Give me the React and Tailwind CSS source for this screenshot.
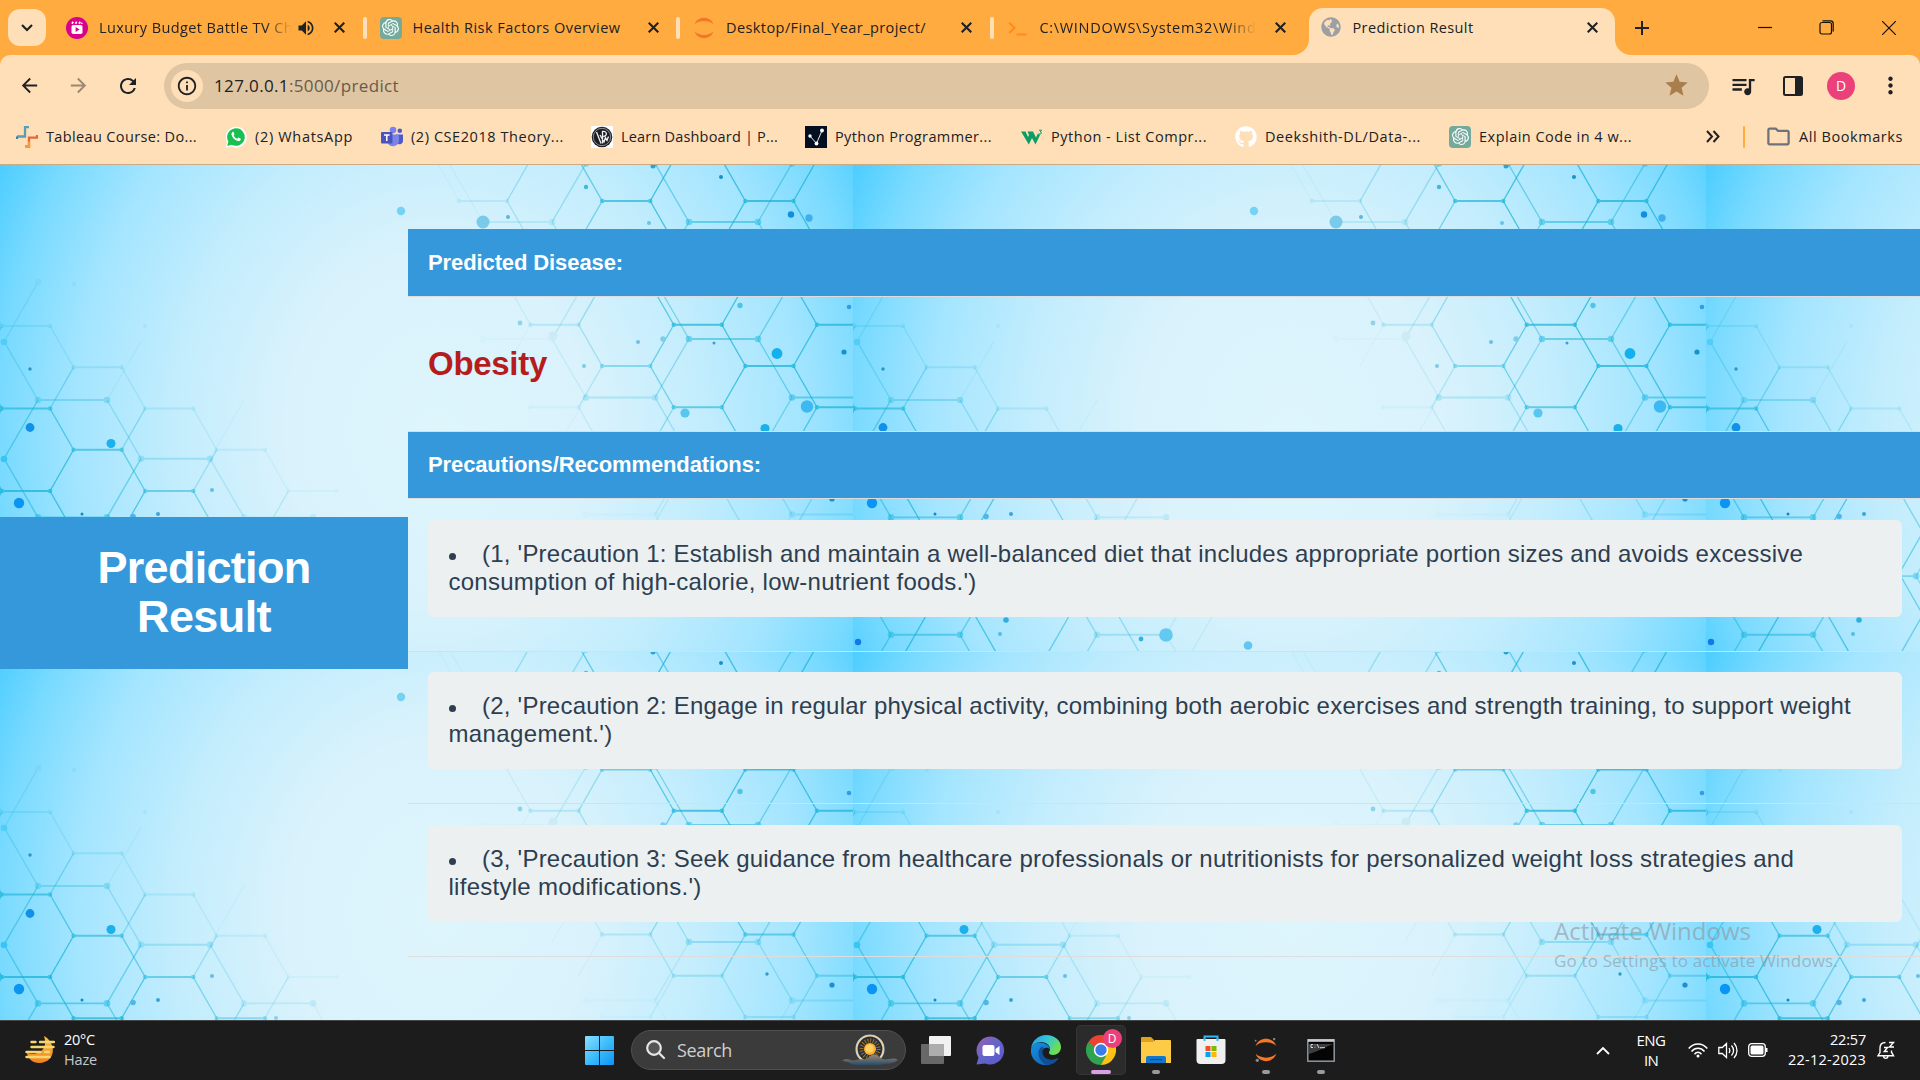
import React, { useLayoutEffect, useRef } from "react";
import {
  MdArrowBack, MdArrowForward, MdRefresh, MdVolumeUp, MdStar, MdQueueMusic,
  MdInfoOutline, MdMoreVert, MdOutlineFolder,
} from "react-icons/md";
import { FaGithub, FaGlobeAmericas } from "react-icons/fa";
import { SiOpenai } from "react-icons/si";

/* One line of text whose letter spacing is set so that it spans `w` pixels. */
function Fit({ w, className = "", children }) {
  const ref = useRef(null);
  useLayoutEffect(() => {
    const el = ref.current;
    el.style.letterSpacing = "0px";
    const n = el.textContent.length;
    const natural = el.getBoundingClientRect().width;
    el.style.letterSpacing = `${(w - natural) / n}px`;
  }, [w, children]);
  return (
    <span className={`block shrink-0 whitespace-nowrap ${className}`} style={{ width: w }}>
      <span ref={ref} className="inline-block">{children}</span>
    </span>
  );
}

/* ---------- molecular wallpaper ---------- */
const TW = 853;
const TH = 486;
const clamp = (v) => Math.min(1, Math.max(0, v));

const leftStrength = (x, y) => clamp(0.27 + (y - 147 - 0.575 * x) / 140) * clamp(1.04 - (x / 370) ** 2);
const rightStrength = (x, y) => clamp(0.07 + (x - 440 - 0.45 * y) / 200) * (y < 240 ? 1 : clamp(1 - (y - 240) / 200));

function hexGrid({ x0, y0, edge, step, h, cols, maxY, r, gain, strength }) {
  const out = [];
  const add = (x1, y1, x2, y2, flat) => {
    const o = strength((x1 + x2) / 2, Math.max((y1 + y2) / 2, 0)) * gain;
    if (o > 0.03) out.push({ x1, y1, x2, y2, flat, o, r });
  };
  for (let c = 0; c < cols; c++) {
    const x = x0 + c * step;
    const lead = step - edge;
    for (let y = y0(c); y <= maxY; y += h) {
      add(x, y, x + edge, y, true);
      add(x + edge, y, x + step, y - h / 2, false);
      add(x + edge, y, x + step, y + h / 2, false);
      if (c === 0) {
        add(x, y, x - lead, y - h / 2, false);
        add(x, y, x - lead, y + h / 2, false);
      }
    }
  }
  return out;
}

const SEGMENTS = [
  ...hexGrid({ x0: 2, y0: (c) => 161 + c * 41.25, edge: 48, step: 71.6, h: 82.5, cols: 5, maxY: 540, r: 2.3, gain: 0.72, strength: leftStrength }),
  ...hexGrid({ x0: 38, y0: (c) => 235 + c * 58.7, edge: 69, step: 103, h: 117.4, cols: 3, maxY: 580, r: 3.3, gain: 0.52, strength: leftStrength }),
  ...hexGrid({ x0: 459, y0: (c) => 36 - 82.5 + (c % 2) * 41.25, edge: 48, step: 71.6, h: 82.5, cols: 6, maxY: 430, r: 2.3, gain: 0.72, strength: rightStrength }),
  ...hexGrid({ x0: 483, y0: (c) => 57 - 117 + (c % 2) * 58.5, edge: 69, step: 103, h: 117, cols: 4, maxY: 430, r: 3.3, gain: 0.5, strength: rightStrength }),
  { x1: 4, y1: 177, x2: 38, y2: 117, o: 0.22 },
];

const DOTS = [
  [401, 46, 4.2, "#74d2f3"], [483, 57, 6.5, "#79cbe9"], [508, 52, 2, "#5cb8dd"], [586, 22, 2.2, "#44b8dc"],
  [653, 1, 2.5, "#27a5d6"], [721, 12, 2, "#1792c8"], [791, 49.5, 3.2, "#118ee0"], [809, 53, 3.7, "#40aeee"],
  [649, 58, 2, "#63c4ec"], [520, 158, 2.4, "#8fd3ea"], [740, 140.5, 2.7, "#4fc4e8"], [849, 142, 2.3, "#2f9ee6"],
  [777, 188.5, 5.4, "#12b0ee"], [844, 187, 2.6, "#1493cb"], [807, 241.5, 6.2, "#3cb9f2"], [685, 248, 4.6, "#57c7f0"],
  [765, 263.5, 4.6, "#19b1ea"], [638, 177, 2, "#6fbfe0"], [663, 174, 2.7, "#7dcdec"], [714, 178, 1.5, "#3ca0c8"],
  [584, 201, 2, "#79cde4"], [832, 334, 2.6, "#198fd6"], [767, 323, 1.7, "#2c9cc8"], [553, 171, 4.500, "#cdebf4"],
  [4, 177, 3.3, "#50cdf8"], [38, 117, 3.2, "#7bd6f8"], [74, 119, 2, "#8adcf8"], [145, 161, 2, "#a6e4f8"],
  [4, 294, 3.3, "#38c4f4"],
  [30, 204, 1.7, "#2c95c8"], [30, 262.5, 4.4, "#1090e8"], [111, 278.5, 4.5, "#1cb0ec"], [19, 338, 5.2, "#0a95f5"],
  [82, 349, 1.5, "#1787c0"], [133, 351.5, 2.8, "#4fb6ea"], [158, 349, 2, "#3ba4d8"], [212, 325, 2, "#62bfe6"],
  [276, 367, 2, "#8acfe6"],
  [5, 477, 3.2, "#1478e8"], [153, 455, 2.8, "#2fb0dc"], [147, 469, 2, "#55bde6"], [288, 474, 2.4, "#35b2de"],
  [313, 470, 6.8, "#62c9f0"], [395, 480.5, 4.3, "#62c6ee"],
];

function Wallpaper() {
  return (
    <svg className="absolute inset-0 h-full w-full" aria-hidden="true">
      <defs>
        <radialGradient id="wash" gradientUnits="userSpaceOnUse" cx="0" cy="0" r="1" gradientTransform="translate(438 265) scale(548 640)">
          <stop offset="0" stopColor="#def5fc" />
          <stop offset="0.28" stopColor="#d9f2fc" />
          <stop offset="0.48" stopColor="#c3edfd" />
          <stop offset="0.66" stopColor="#a4e5ff" />
          <stop offset="0.8" stopColor="#78daff" />
          <stop offset="0.9" stopColor="#4ccdff" />
        </radialGradient>
        <pattern id="tile" width={TW} height={TH} patternUnits="userSpaceOnUse">
          <rect width={TW} height={TH} fill="url(#wash)" />
          {SEGMENTS.map((s, i) => (
            <g key={i} opacity={s.o} stroke="#18b2d6" fill="#18b8e0">
              <line x1={s.x1} y1={s.y1} x2={s.x2} y2={s.y2} strokeWidth={s.flat ? 1.9 : 1.4} />
              {s.flat && <circle cx={s.x1} cy={s.y1} r={s.r} stroke="none" />}
              {s.flat && <circle cx={s.x2} cy={s.y2} r={s.r} stroke="none" />}
            </g>
          ))}
          {DOTS.map(([x, y, r, c], i) => <circle key={i} cx={x} cy={y} r={r} fill={c} />)}
        </pattern>
      </defs>
      <rect width="100%" height="100%" fill="url(#tile)" />
    </svg>
  );
}

/* ---------- favicons ---------- */
const Reel = () => (
  <svg viewBox="0 0 22 22" className="h-[22px] w-[22px]">
    <circle cx="11" cy="11" r="11" fill="#d9008d" />
    <rect x="5.5" y="8" width="11" height="9" rx="1.8" fill="#fff" />
    <path d="M6 6.8l1.2-2M9.5 6.8l1.2-2M13 6.8l1.2-2M15.5 6.8l.6-1" stroke="#fff" strokeWidth="1.7" />
    <path d="M9.6 10l4 2.5-4 2.5z" fill="#d9008d" />
  </svg>
);
const Gpt = () => (
  <span className="flex h-[22px] w-[22px] items-center justify-center rounded-[4px] bg-[#74aa9c] text-white"><SiOpenai size={17} /></span>
);
const JupyterArcs = ({ size = 22, dots = false }) => (
  <svg viewBox="0 0 22 22" width={size} height={size}>
    <path d="M1.5 7.3C3 3 7 .8 11 .8s8 2.2 9.5 6.5C18 5 14.5 4 11 4S4 5 1.5 7.3zM1.5 14.5C3 19 7 21.2 11 21.2s8-2.2 9.5-6.7C18 16.800 14.5 18 11 18s-7-1.200-9.500-3.500z" fill="#f37726" />
    {dots && <g fill="#8a8a8a"><circle cx="18.5" cy="1" r="1.1" /><circle cx="3" cy="20.500" r="1.5" /><circle cx="1.5" cy="2.5" r=".8" /></g>}
  </svg>
);
const Prompt = () => (
  <svg viewBox="0 0 22 22" className="h-[22px] w-[22px]" fill="none" stroke="#ff8a1e" strokeWidth="2"><path d="M2 5.5l5.5 5.5L2 16M9.5 17.5h10" /></svg>
);
const Tableau = () => (
  <svg viewBox="0 0 22 22" className="h-[22px] w-[22px]" fill="none" strokeWidth="2.3">
    <path d="M13 1.200h-4v9.300H1" stroke="#5b9db5" /><path d="M1 13v-2.500" stroke="#3d7ea6" />
    <path d="M9 20.500h4v-8.800h8V9" stroke="#e8663d" /><path d="M9 20.500h4v-5" stroke="#f79a3c" />
  </svg>
);
const WhatsApp = () => (
  <svg viewBox="0 0 22 22" className="h-[22px] w-[22px]">
    <path d="M.5 21.700L2 16A10.500 10.500 0 1 1 6 20.200z" fill="#fff" />
    <path d="M2.200 19.900l1.200-4.300a8.800 8.800 0 1 1 3.200 3.100z" fill="#18c04f" />
    <path d="M7.600 6c-.9.600-1.400 1.800-1 3 .9 2.900 3 5 6 6 1.300.4 2.600-.1 3.100-1.200.3-.8.200-1-.3-1.300l-1.600-.8c-.4-.2-.7-.1-.9.200l-.7.9c-1.600-.6-2.800-1.700-3.600-3.200l.7-.9c.2-.3.200-.5.100-.8L8.700 6.200c-.3-.5-.7-.5-1.100-.2z" fill="#fff" />
  </svg>
);
const Teams = () => (
  <svg viewBox="0 0 22 22" className="h-[22px] w-[22px]">
    <circle cx="12" cy="4" r="3.300" fill="#7b83eb" /><circle cx="18.800" cy="4.800" r="2.300" fill="#5059c9" />
    <path d="M15 8.500h7v6.500a3.500 3.500 0 0 1-5 3z" fill="#5059c9" />
    <path d="M6.500 8.500H18V15a6 6 0 0 1-11.500 1.500z" fill="#7b83eb" />
    <rect x="0" y="6" width="11.500" height="11.500" rx="1" fill="#4b53bc" />
    <path d="M3 9h5.600M5.800 9v6" stroke="#fff" strokeWidth="1.500" />
  </svg>
);
const Press = () => (
  <svg viewBox="0 0 22 22" className="h-[22px] w-[22px]">
    <rect width="22" height="22" fill="#fff" /><circle cx="11" cy="11" r="10.300" fill="#1b1f24" />
    <circle cx="11" cy="11" r="8.700" fill="none" stroke="#a8abae" strokeWidth=".8" />
    <path d="M5.500 6l4.500 11.500M11.500 17.500V5.500c4.500-1 5.500 4.500.8 5M9 9l4 7 1.500-4.500 1.500 3 1.500-4" fill="none" stroke="#f1f1f1" strokeWidth="1.300" />
  </svg>
);
const Nodes = () => (
  <svg viewBox="0 0 22 22" className="h-[22px] w-[22px]">
    <rect width="22" height="22" fill="#010f20" /><path d="M5 10l6.500 7.500L17 4.500" fill="none" stroke="#dfe5ea" strokeWidth="1" />
    <g fill="#fff"><circle cx="5" cy="10" r="1.700" /><circle cx="11.500" cy="17.500" r="1.900" /><circle cx="17" cy="4.500" r="1.900" /></g>
  </svg>
);
const W3 = () => (
  <svg viewBox="0 0 22 22" className="h-[22px] w-[22px]">
    <path d="M0 5.500h4.500l2.500 5.500 1-2L6.500 5.500H12l3 6 2-4 2 1.500-4.500 9.500-3.500-6.500-3.200 6.500z" fill="#0b9d66" />
    <path d="M18 4.200h2.700l-1.500 1.700c2 .1 1.800 2.800-1.400 2" fill="none" stroke="#0b9d66" strokeWidth="1" />
  </svg>
);

/* ---------- browser chrome ---------- */
const CloseX = ({ className = "" }) => (
  <svg viewBox="0 0 11 11" className={`h-[11px] w-[11px] shrink-0 ${className}`} fill="none" stroke="#202124" strokeWidth="2.100"><path d="M.7.700l9.600 9.600M10.300.700L.7 10.300" /></svg>
);

const tabFade = "[mask-image:linear-gradient(90deg,#000_86%,transparent)]";

function Tab({ icon, title, w, fade, sound, last }) {
  return (
    <div className={`flex h-[54px] shrink-0 items-center pl-[13px] ${last ? "w-[315px]" : "w-[313.5px]"}`}>
      <span className="flex w-[22px] shrink-0 justify-center">{icon}</span>
      <div className={`ml-[11px] overflow-hidden ${sound ? "w-[193px]" : "w-[216px]"} ${fade ? tabFade : ""}`}>
        <Fit w={w} className="text-[14.5px]">{title}</Fit>
      </div>
      {sound && <MdVolumeUp size={20} className="ml-[4px] mr-[-1px] shrink-0" />}
      <CloseX className="ml-[19px]" />
      {!last && <span className="ml-auto h-[22px] w-[4px] rounded-full bg-[#ffdfb8]" />}
    </div>
  );
}

function TabStrip() {
  return (
    <div className="flex h-[55px] items-center bg-[#ffab40]">
      <div className="ml-[8px] flex h-[37px] w-[38px] shrink-0 items-center justify-center rounded-[12px] bg-[#ffdfb8]">
        <svg viewBox="0 0 12 8" className="h-[8px] w-[12px]" fill="none" stroke="#202124" strokeWidth="2.200"><path d="M1 1l5 5 5-5" /></svg>
      </div>
      <div className="ml-[7px] flex shrink-0">
        <Tab icon={<Reel />} title="Luxury Budget Battle TV Ch" w={194} fade sound />
        <Tab icon={<Gpt />} title="Health Risk Factors Overview" w={208} />
        <Tab icon={<JupyterArcs />} title="Desktop/Final_Year_project/" w={200} />
        <Tab icon={<Prompt />} title="C:\WINDOWS\System32\Wind" w={217} fade last />
      </div>
      <div className="relative flex h-[47px] w-[306px] shrink-0 items-center self-end rounded-t-[14px] bg-[#ffdfb8] pb-[2px] pl-[12px]">
        <svg viewBox="0 0 16 16" className="absolute bottom-0 left-[-16px] h-[16px] w-[16px]"><path d="M16 0v16H0A16 16 0 0 0 16 0z" fill="#ffdfb8" /></svg>
        <svg viewBox="0 0 16 16" className="absolute right-[-16px] bottom-0 h-[16px] w-[16px]"><path d="M0 0v16h16A16 16 0 0 1 0 0z" fill="#ffdfb8" /></svg>
        <FaGlobeAmericas size={20} className="mt-[-7px] text-[#9aa0a6]" />
        <Fit w={121} className="mt-[-5px] ml-[12px] text-[14.5px]">Prediction Result</Fit>
        <CloseX className="mt-[-7px] mr-[17px] ml-auto" />
      </div>
      <svg viewBox="0 0 14 14" className="ml-[20px] h-[14px] w-[14px] shrink-0" fill="none" stroke="#202124" strokeWidth="2"><path d="M0 7h14M7 0v14" /></svg>
      <svg viewBox="0 0 14 14" className="ml-[109px] h-[14px] w-[14px]" fill="none" stroke="#111" strokeWidth="1.2"><path d="M0 6.500h14" /></svg>
      <svg viewBox="0 0 15 15" className="ml-[47px] h-[15px] w-[15px]" fill="none" stroke="#111" strokeWidth="1.2"><rect x="1" y="2.500" width="11.500" height="11.500" rx="2" /><path d="M3.500.8h8a2.700 2.700 0 0 1 2.700 2.700v8" /></svg>
      <svg viewBox="0 0 14 14" className="ml-[48px] h-[14px] w-[14px]" fill="none" stroke="#111" strokeWidth="1.2"><path d="M0 0l14 14M14 0L0 14" /></svg>
    </div>
  );
}

function Toolbar() {
  return (
    <div className="h-[61px] bg-[#ffab40]">
      <div className="flex h-full items-center rounded-t-[10px] bg-[#ffdfb8]">
        <MdArrowBack size={23} className="ml-[18px] shrink-0" stroke="none" />
        <MdArrowForward size={23} className="ml-[26px] shrink-0 text-[#9b8870]" />
        <MdRefresh size={24} className="ml-[26px] shrink-0" />
        <div className="ml-[24px] flex h-[46px] w-[1545px] shrink-0 items-center rounded-full bg-[#dfc5a2]">
          <span className="ml-[7px] flex h-[32px] w-[32px] items-center justify-center rounded-full bg-[#ffdfb8]"><MdInfoOutline size={22} /></span>
          <Fit w={185} className="ml-[11px] text-[17px] text-[#675b4b]"><span className="text-[#202124]">127.0.0.1</span>:5000/predict</Fit>
          <MdStar size={27} className="mr-[19px] ml-auto text-[#a97e4d]" />
        </div>
        <MdQueueMusic size={28} className="ml-[20px] shrink-0" />
        <svg viewBox="0 0 20 20" className="ml-[26px] h-[20px] w-[20px] shrink-0"><rect x="1" y="1" width="18" height="18" rx="1.500" fill="none" stroke="#202124" strokeWidth="2" /><path d="M12 1h7v18h-7z" fill="#202124" /></svg>
        <span className="ml-[24px] flex h-[28px] w-[28px] shrink-0 items-center justify-center rounded-full bg-[#ec407a] text-[14px] text-white">D</span>
        <MdMoreVert size={27} className="ml-[22px] shrink-0" />
      </div>
    </div>
  );
}

const BOOKMARKS = [
  { icon: <Tableau />, text: "Tableau Course: Do...", w: 151, m: "ml-[16px]" },
  { icon: <WhatsApp />, text: "(2) WhatsApp", w: 98, m: "ml-[28px]" },
  { icon: <Teams />, text: "(2) CSE2018 Theory...", w: 153, m: "ml-[28px]" },
  { icon: <Press />, text: "Learn Dashboard | P...", w: 157, m: "ml-[27px]" },
  { icon: <Nodes />, text: "Python Programmer...", w: 157, m: "ml-[27px]" },
  { icon: <W3 />, text: "Python - List Compr...", w: 156, m: "ml-[29px]" },
  { icon: <FaGithub size={22} color="#fff" />, text: "Deekshith-DL/Data-...", w: 156, m: "ml-[28px]" },
  { icon: <Gpt />, text: "Explain Code in 4 w...", w: 153, m: "ml-[28px]" },
];

function BookmarkBar() {
  return (
    <div className="flex h-[49px] items-center border-b-[1px] border-[#c9ab86] bg-[#ffdfb8] pb-[7px]">
      {BOOKMARKS.map((b) => (
        <div key={b.text} className={`flex shrink-0 items-center ${b.m}`}>
          <span className="w-[22px]">{b.icon}</span>
          <Fit w={b.w} className="ml-[8px] text-[14.5px]">{b.text}</Fit>
        </div>
      ))}
      <svg viewBox="0 0 14 13" className="ml-[74px] h-[13px] w-[14px]" fill="none" stroke="#202124" strokeWidth="2"><path d="M1 1l5 5.500L1 12M7.500 1l5 5.500-5 5.500" /></svg>
      <span className="ml-[23px] h-[22px] w-[2px] rounded-full bg-[#ffab40]" />
      <MdOutlineFolder size={27} className="ml-[20px] text-[#6f7378]" />
      <Fit w={104} className="ml-[7px] text-[14.5px]">All Bookmarks</Fit>
    </div>
  );
}

/* ---------- page ---------- */
const PRECAUTIONS = [
  { lines: [["(1, 'Precaution 1: Establish and maintain a well-balanced diet that includes appropriate portion sizes and avoids excessive", 1321], ["consumption of high-calorie, low-nutrient foods.')", 528]], h: "h-[153px] pt-[21px]" },
  { lines: [["(2, 'Precaution 2: Engage in regular physical activity, combining both aerobic exercises and strength training, to support weight", 1369], ["management.')", 164]], h: "h-[152px] pt-[20px]" },
  { lines: [["(3, 'Precaution 3: Seek guidance from healthcare professionals or nutritionists for personalized weight loss strategies and", 1312], ["lifestyle modifications.')", 253]], h: "h-[153px] pt-[21px]" },
];

function Page() {
  return (
    <main className="relative h-[855px] overflow-hidden font-['Liberation_Sans',Arial,sans-serif]">
      <Wallpaper />
      <div className="relative flex h-full">
        <div className="mt-[352px] flex h-[152px] w-[408px] shrink-0 flex-col items-center bg-[#3598db] pt-[26px] text-[45px] leading-[49px] font-bold text-white">
          <Fit w={213}>Prediction</Fit>
          <Fit w={134}>Result</Fit>
        </div>
        <div className="mt-[64px] min-w-0 flex-1 text-[#2c3e50]">
          <div className="flex h-[68px] items-center border-b border-[#ddd] bg-[#3598db] pl-[20px] text-[22px] font-bold text-white"><Fit w={195}>Predicted Disease:</Fit></div>
          <div className="flex h-[135px] items-center border-b border-[#ddd] pl-[20px] text-[33px] font-bold text-[#b71c1c]"><Fit w={119}>Obesity</Fit></div>
          <div className="flex h-[67px] items-center border-b border-[#ddd] bg-[#3598db] pb-[2px] pl-[20px] text-[22px] font-bold text-white"><Fit w={333}>Precautions/Recommendations:</Fit></div>
          {PRECAUTIONS.map((p) => (
            <div key={p.lines[0][0]} className={`border-b border-[#ddd] pl-[20px] ${p.h}`}>
              <div className="h-[97px] w-[1474px] rounded-[6px] bg-[#ecf0f1] px-[20px] pt-[20px] text-[24px] leading-[28px]">
                <div className="flex items-center">
                  <span className="mt-[4px] mr-[26px] ml-[1px] h-[7px] w-[7px] rounded-full bg-[#2c3e50]" />
                  <Fit w={p.lines[0][1]}>{p.lines[0][0]}</Fit>
                </div>
                <Fit w={p.lines[1][1]} className="ml-[0.5px]">{p.lines[1][0]}</Fit>
              </div>
            </div>
          ))}
        </div>
      </div>
      <div className="absolute top-[748px] left-[1554px] font-['Open_Sans','Noto_Sans',sans-serif] text-[#8f9499]/60">
        <Fit w={197} className="text-[24px] leading-[36px]">Activate Windows</Fit>
        <Fit w={284} className="text-[17px] leading-[24px]">Go to Settings to activate Windows.</Fit>
      </div>
    </main>
  );
}

/* ---------- taskbar ---------- */
const Slot = ({ children, running, active }) => (
  <div className={`relative flex h-[50px] w-[50px] shrink-0 items-center justify-center rounded-[5px] ${active ? "bg-[#2b2b2b] ring-1 ring-[#353535] ring-inset" : ""}`}>
    {children}
    {running && <span className="absolute bottom-[1px] h-[4px] w-[8px] rounded-full bg-[#9a9a9a]" />}
    {active && <span className="absolute bottom-[1px] h-[4px] w-[20px] rounded-full bg-[#d9a0e6]" />}
  </div>
);

function Taskbar() {
  return (
    <footer className="flex h-[60px] items-center border-t border-[#454545] bg-[#1c1c1c] pb-px text-white">
      <svg viewBox="0 0 30 30" className="ml-[25px] h-[30px] w-[30px] shrink-0">
        <defs><linearGradient id="moon" x2="0" y2="1"><stop stopColor="#f9c23c" /><stop offset="1" stopColor="#f08222" /></linearGradient></defs>
        <path d="M19 1c13 7 12 27-5 27C8 28 3 24 2 18c9 3 22-2 17-17z" fill="url(#moon)" />
        <g stroke="#f5d673" strokeWidth="2.400" strokeLinecap="round"><path d="M6.500 7h4M15 7h14M6.500 12h22M1.500 17h14M20 17h4M1.500 22h23" /></g>
      </svg>
      <div className="ml-[9px] w-[60px] text-[14.5px] leading-[20px]"><Fit w={31}>20°C</Fit><Fit w={33} className="text-[#c8c8c8]">Haze</Fit></div>
      <svg viewBox="0 0 29 29" className="ml-[461px] h-[29px] w-[29px] shrink-0">
        <defs><linearGradient id="win" x2="1" y2="1"><stop stopColor="#8be0ff" /><stop offset=".5" stopColor="#3dbdfb" /><stop offset="1" stopColor="#0f93f5" /></linearGradient></defs>
        <path d="M0 1q0-1 1-1h13v14H0zM15 0h13q1 0 1 1v13H15zM0 15h14v14H1q-1 0-1-1zM15 15h14v13q0 1-1 1H15z" fill="url(#win)" />
      </svg>
      <div className="ml-[17px] flex h-[40px] w-[275px] shrink-0 items-center rounded-full border border-[#505050] bg-[#3b3b3b]">
        <svg viewBox="0 0 20 20" className="ml-[14px] h-[20px] w-[20px]" fill="none" stroke="#e4e6e8" strokeWidth="2.200" strokeLinecap="round"><circle cx="8" cy="8" r="6.800" fill="#555" /><path d="M13 13l5 5" /></svg>
        <Fit w={55} className="ml-[11px] text-[18px] text-[#cfcfcf]">Search</Fit>
        <svg viewBox="0 0 56 34" className="mr-[7px] ml-auto h-[34px] w-[56px]">
          <defs><linearGradient id="hill" x2="0" y2="1"><stop stopColor="#a18772" /><stop offset="1" stopColor="#274c68" /></linearGradient></defs>
          <circle cx="28" cy="16" r="14" fill="#2a3038" stroke="#8fd0dc" strokeWidth="1.200" /><circle cx="28" cy="16" r="13.200" fill="none" stroke="#f6cfa4" strokeWidth="1.600" />
          <circle cx="28" cy="16" r="8.500" fill="none" stroke="#a87d28" strokeWidth="4" strokeDasharray=".9 1.770" />
          <circle cx="28" cy="16" r="6" fill="#fdb02e" /><circle cx="27.500" cy="15.500" r="4" fill="#ffd163" />
          <path d="M0 28c5-5 9 1 14-1s9 1 13-3 7-3 12 1 12-2 17 2c-6 5-12 3-18 5H14c-5 0-8-4-14-4z" fill="url(#hill)" />
        </svg>
      </div>
      <svg viewBox="0 0 30 28" className="ml-[15px] h-[28px] w-[30px] shrink-0"><rect x="8" y="0" width="22" height="20" rx="1" fill="#f2f2f2" /><rect x="0" y="8" width="23" height="20" rx="1" fill="#686868" /><path d="M8 8h15v12H8z" fill="#adadad" /></svg>
      <div className="ml-[14.5px] flex items-center gap-[5px]">
        <Slot>
          <svg viewBox="0 0 29 29" className="h-[29px] w-[29px]"><defs><linearGradient id="chat" x2="1" y2="1"><stop stopColor="#9c62b6" /><stop offset=".5" stopColor="#6264c8" /><stop offset="1" stopColor="#5b57d0" /></linearGradient></defs><path d="M15 .5a14 14 0 1 1-6 27L.5 28.500l2-7A14 14 0 0 1 15 .5z" fill="url(#chat)" /><rect x="6.500" y="9" width="12" height="11" rx="2" fill="#fff" /><path d="M19.500 13l4-3v9l-4-3z" fill="#fff" /></svg>
        </Slot>
        <Slot>
          <svg viewBox="0 0 30 30" className="h-[30px] w-[30px]">
            <defs><linearGradient id="e1" x2="1" y2=".5"><stop stopColor="#1e9de6" /><stop offset=".5" stopColor="#33c3dd" /><stop offset="1" stopColor="#6ee04f" /></linearGradient><linearGradient id="e2" x2="1" y2="1"><stop stopColor="#1a8fe0" /><stop offset="1" stopColor="#0d5cae" /></linearGradient></defs>
            <path d="M0 14C1 5 8 0 15 0c9 0 15 6 15 12 0 5-4 8-8 8-3 0-4-1-4-2.500 0-1 1-1.500 1-3.500C19 10 15 7 10 7 5 7 1 10 0 14z" fill="url(#e1)" />
            <path d="M0 14c1-4 4-6.500 9-6.500 5 0 10 3 10 7-2-3-8-2-8 3 0 6 8 10 16 5.500C24 28 20 30 15 30 6 30-1 23 0 14z" fill="url(#e2)" />
            <path d="M11 11.500c-6 4-4 14 4 18.300 5 .5 10-2.300 12.500-6.500-8 4-16 0-16-6 0-2 .5-3 1.500-4z" fill="#0f4f96" />
          </svg>
        </Slot>
        <Slot active>
          <svg viewBox="0 0 30 30" className="h-[30px] w-[30px]">
            <path d="M15 15L2 7.500A15 15 0 0 1 28 7.500z" fill="#ea4335" /><path d="M15 15L28 7.500A15 15 0 0 1 15 30z" fill="#fbc116" /><path d="M15 30A15 15 0 0 1 2 7.500L15 15l5 6z" fill="#31a350" /><path d="M15 8h13.300L21.500 19z" fill="#fbc116" /><path d="M2 7.500L9 19l6-11z" fill="#31a350" /><path d="M2.500 7h25v1.500H15L9 12z" fill="#ea4335" />
            <circle cx="15" cy="15" r="7.200" fill="#fff" /><circle cx="15" cy="15" r="5.700" fill="#3a7de8" />
          </svg>
          <span className="absolute top-[4px] left-[27px] flex h-[19px] w-[19px] items-center justify-center rounded-full bg-[#ec407a] text-[12px] leading-none">D</span>
        </Slot>
        <Slot running>
          <svg viewBox="0 0 30 27" className="h-[27px] w-[30px]"><path d="M0 1q0-1 1-1h9l3 3v5H0z" fill="#e0a21c" /><path d="M0 5h12l2-2h15q1 0 1 1v22H0z" fill="#fdcb45" /><path d="M5 26v-5q0-2 2-2h16q2 0 2 2v5z" fill="#1277cc" /><path d="M9 22.500h12" stroke="#0b4f94" strokeWidth="1.200" /></svg>
        </Slot>
        <Slot>
          <svg viewBox="0 0 30 30" className="h-[30px] w-[30px]"><path d="M8.500 6V1.500h13V6" fill="none" stroke="#35b8f0" strokeWidth="2" /><path d="M.5 5q0-1 1-1h27q1 0 1 1v20q0 4-4 4h-21q-4 0-4-4z" fill="#f0f0f0" /><path d="M8.500 6V3.500M21.500 6V3.500" stroke="#35b8f0" strokeWidth="2" /><path d="M9.500 11h5v5h-5z" fill="#f25022" /><path d="M15.500 11h5v5h-5z" fill="#7fba00" /><path d="M9.500 17h5v5h-5z" fill="#00a4ef" /><path d="M15.500 17h5v5h-5z" fill="#ffb900" /></svg>
        </Slot>
        <Slot running><JupyterArcs size={24} dots /></Slot>
        <Slot running>
          <svg viewBox="0 0 28 23" className="h-[23px] w-[28px]"><rect x=".8" y=".8" width="26.400" height="21.400" fill="#050505" stroke="#8f979e" strokeWidth="1.500" /><path d="M1 1.500h26" stroke="#c8ccd0" strokeWidth="2.600" /><path d="M2 5h24L8 13l-6 2z" fill="#555" opacity=".7" /><path d="M6 5.500H4v3h2M8 5.500v.8M8 7.800v.8M10 5l2 4M13 8.700h5" stroke="#e8e8e8" strokeWidth=".9" fill="none" /></svg>
        </Slot>
      </div>
      <svg viewBox="0 0 14 9" className="ml-[250.5px] h-[9px] w-[14px] shrink-0" fill="none" stroke="#fff" strokeWidth="1.800"><path d="M1 8l6-6 6 6" /></svg>
      <div className="ml-[26px] flex w-[30px] flex-col items-center text-[15px] leading-[20px]"><Fit w={29}>ENG</Fit><Fit w={14}>IN</Fit></div>
      <svg viewBox="0 0 20 15" className="ml-[22px] h-[15px] w-[20px] shrink-0" fill="none" stroke="#fff" strokeWidth="1.500"><path d="M.7 5.500c5-6 13.600-6 18.600 0M3.500 8.500c3.600-4.300 9.400-4.300 13 0M6.500 11.200c2-2.500 5-2.500 7 0" /><circle cx="10" cy="13" r="1.500" fill="#fff" stroke="none" /></svg>
      <svg viewBox="0 0 20 17" className="ml-[10px] h-[17px] w-[20px] shrink-0" fill="none" stroke="#fff" strokeWidth="1.300"><path d="M.8 5.500h3.500L8.500 1.500v14l-4.200-4H.8zM11 6c1 1.500 1 3.500 0 5M13.500 3.500c2.500 3 2.500 7 0 10M16 1c4 4.500 4 10.500 0 15" /></svg>
      <svg viewBox="0 0 20 14" className="ml-[10px] h-[14px] w-[20px] shrink-0"><rect x=".7" y=".7" width="16.600" height="12.600" rx="3" fill="none" stroke="#fff" strokeWidth="1.300" /><rect x="2.500" y="2.500" width="13" height="9" rx="1.500" fill="#fff" /><path d="M18.500 5v4" stroke="#fff" strokeWidth="2" /></svg>
      <div className="ml-[20px] flex w-[78px] flex-col items-end text-[14.5px] leading-[20px]"><Fit w={36}>22:57</Fit><Fit w={78}>22-12-2023</Fit></div>
      <svg viewBox="0 0 18 19" className="ml-[11px] h-[19px] w-[18px] shrink-0" fill="none" stroke="#fff" strokeWidth="1.400"><path d="M8.500 1.500C4.500 1.500 3 4 3 7v4.500L1 14.700h15.500l-2-3.500V9.500M6.500 15.500c.5 2.500 4 2.500 4.500 0M12 1.500h4.500L12.500 6H17M7 6.500h3.500L7.300 10.500h3.500" /></svg>
    </footer>
  );
}

export default function App() {
  return (
    <div className="h-[1080px] w-[1920px] overflow-hidden font-['Open_Sans','Noto_Sans',sans-serif] text-[#202124]">
      <TabStrip />
      <Toolbar />
      <BookmarkBar />
      <Page />
      <Taskbar />
    </div>
  );
}
